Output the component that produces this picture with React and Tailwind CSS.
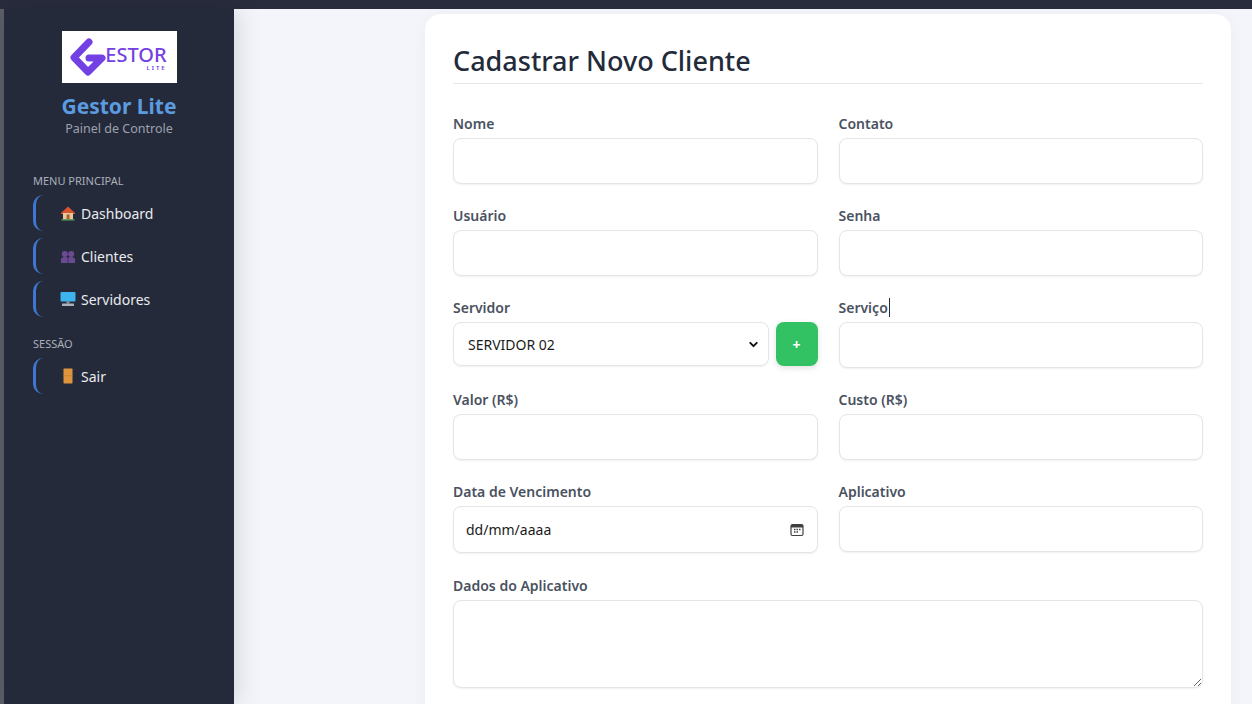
import { ChevronDown } from 'lucide-react';

const font = { fontFamily: '"Noto Sans", "Open Sans", sans-serif' };

const HomeIcon = () => (
  <svg width="16" height="16" viewBox="0 0 16 16">
    <path d="M1 8 8 1.5 15 8v1H1z" fill="#d9542f" />
    <rect x="3" y="8" width="10" height="6.5" fill="#e8c79a" />
    <rect x="6.6" y="9.5" width="3" height="5" fill="#a8622d" />
    <rect x="1.5" y="14.2" width="13" height="1.3" fill="#58a55c" />
  </svg>
);

const UsersIcon = () => (
  <svg width="16" height="16" viewBox="0 0 16 16" fill="#6b4a94">
    <circle cx="4.8" cy="6" r="3" />
    <circle cx="11.2" cy="6" r="3" />
    <path d="M1 15v-3.5C1 10 2.5 9 4.5 9h2c.8 0 1.2.8 1.2 2v4zM8.3 15v-4c0-1.2.4-2 1.2-2h2c2 0 3.500 1 3.500 2.500V15z" />
  </svg>
);

const ScreenIcon = () => (
  <svg width="16" height="16" viewBox="0 0 16 16">
    <rect x="0.500" y="1" width="15" height="9.500" rx="1" fill="#3db4ee" />
    <rect x="6.500" y="10.500" width="3" height="2" fill="#8d99a3" />
    <rect x="2" y="12.500" width="12" height="2.500" rx="0.500" fill="#a9b3bb" />
  </svg>
);

const DoorIcon = () => (
  <svg width="16" height="16" viewBox="0 0 16 16">
    <rect x="3.500" y="0.500" width="9" height="15" rx="0.700" fill="#e0933f" />
    <rect x="3.500" y="7.500" width="9" height="0.700" fill="#c77d2e" />
  </svg>
);

const CalendarIcon = () => (
  <svg width="14" height="14" viewBox="0 0 14 14" fill="none">
    <rect x="1" y="1.500" width="12" height="11" rx="1.500" stroke="#3f3f3f" strokeWidth="1.200" />
    <rect x="1" y="2" width="12" height="2.500" fill="#3f3f3f" />
    <path d="M4 6.500h1.500M6.500 6.500H8M9 6.500h1.500M4 9h1.500M6.500 9H8" stroke="#3f3f3f" strokeWidth="1.400" />
  </svg>
);

const LogoMark = () => (
  <svg width="42" height="39" viewBox="0 0 42 39" fill="none">
    <path
      d="M21 4 6 19.500 20 34l14-14H21"
      stroke="#7340e4"
      strokeWidth="7"
      strokeLinecap="round"
      strokeLinejoin="round"
    />
  </svg>
);

const MenuItem = ({ icon, label }) => (
  <a className="flex h-[36px] items-center gap-[5px] rounded-l-[10px] border-l-[3px] border-[#3f76d2] pl-[24px] text-[14px] text-[#e9ebef]">
    <span className="flex w-[16px] items-center justify-center">{icon}</span>
    <span>{label}</span>
  </a>
);

const Field = ({ label, children }) => (
  <div className="flex flex-col">
    <label className="mb-[4px] h-[20px] text-[14px] font-semibold leading-[20px] text-[#4a5261]">{label}</label>
    {children}
  </div>
);

const inputClass =
  'h-[46px] w-full rounded-[8px] border border-[#e3e5e9] bg-white shadow-[0_1px_2px_rgba(0,0,0,0.06)] outline-none';

const App = () => {
  return (
    <div className="flex h-screen flex-col overflow-hidden bg-[#f4f5fa]" style={font}>
      <div className="h-[9px] shrink-0 bg-[#282c3d]" />
      <div className="flex min-h-0 flex-1">
        <div className="w-[4px] shrink-0 bg-[#5b5e66]" />

        <aside className="z-10 flex w-[230px] shrink-0 flex-col bg-[#252a3a] shadow-[4px_0_24px_rgba(0,0,0,0.12)]">
          <div className="flex flex-col items-center pt-[22px]">
            <div className="ml-[0px] flex h-[52px] w-[115px] items-center justify-center bg-white pr-[3px]">
              <LogoMark />
              <div className="-ml-[5px] flex flex-col items-end">
                <span className="text-[20px] font-medium leading-[21px] text-[#7340e4]">ESTOR</span>
                <span className="text-[6px] font-semibold leading-[6px] tracking-[2px] text-[#7340e4]">LITE</span>
              </div>
            </div>
            <div className="mt-[7px] text-[21px] font-bold leading-[32px] text-[#5b9be0]">Gestor Lite</div>
            <div className="text-[12.500px] leading-[14px] text-[#9ba1ad]">Painel de Controle</div>
          </div>

          <div className="mt-[37px] pl-[29px] text-[11px] leading-[16px] text-[#aab0bb]">MENU PRINCIPAL</div>
          <nav className="mt-[6px] flex flex-col gap-[7px] pl-[29px]">
            <MenuItem icon={<HomeIcon />} label="Dashboard" />
            <MenuItem icon={<UsersIcon />} label="Clientes" />
            <MenuItem icon={<ScreenIcon />} label="Servidores" />
          </nav>

          <div className="mt-[19px] pl-[29px] text-[11px] leading-[16px] text-[#aab0bb]">SESSÃO</div>
          <nav className="mt-[6px] flex flex-col pl-[29px]">
            <MenuItem icon={<DoorIcon />} label="Sair" />
          </nav>
        </aside>

        <main className="min-w-0 flex-1 pl-[191px] pr-[21px] pt-[5px]">
          <div className="rounded-[16px] bg-white px-[28px] pt-[28px] pb-[40px] shadow-[0_2px_16px_rgba(30,40,80,0.04)]">
            <h1 className="border-b border-[#e5e7eb] pb-[3px] text-[27px] font-medium leading-[38px] text-[#232b3a]">
              Cadastrar Novo Cliente
            </h1>

            <form className="mt-[30px] grid grid-cols-2 gap-x-[21px]">
              <div className="h-[92px]">
                <Field label="Nome">
                  <input className={inputClass} />
                </Field>
              </div>
              <div className="h-[92px]">
                <Field label="Contato">
                  <input className={inputClass} />
                </Field>
              </div>
              <div className="h-[92px]">
                <Field label="Usuário">
                  <input className={inputClass} />
                </Field>
              </div>
              <div className="h-[92px]">
                <Field label="Senha">
                  <input className={inputClass} />
                </Field>
              </div>
              <div className="h-[92px]">
                <Field label="Servidor">
                  <div className="flex gap-[7px]">
                    <div className="flex h-[44px] flex-1 items-center justify-between rounded-[8px] border border-[#e3e5e9] bg-white pl-[14px] pr-[8px] text-[14px] text-[#1b1b1b] shadow-[0_1px_2px_rgba(0,0,0,0.06)]">
                      <span>SERVIDOR 02</span>
                      <ChevronDown size={13} strokeWidth={3.500} color="#111" />
                    </div>
                    <button
                      type="button"
                      className="h-[44px] w-[42px] rounded-[8px] bg-[#33c263] text-[14px] font-bold text-white shadow-[0_2px_6px_rgba(0,0,0,0.12)]"
                    >
                      +
                    </button>
                  </div>
                </Field>
              </div>
              <div className="h-[92px]">
                <Field label={<>Serviç<span className="border-r border-[#232b3a] pr-px">o</span></>}>
                  <input className={inputClass} />
                </Field>
              </div>
              <div className="h-[92px]">
                <Field label="Valor (R$)">
                  <input className={inputClass} />
                </Field>
              </div>
              <div className="h-[92px]">
                <Field label="Custo (R$)">
                  <input className={inputClass} />
                </Field>
              </div>
              <div className="h-[94px]">
                <Field label="Data de Vencimento">
                  <div className="flex h-[47px] items-center justify-between rounded-[8px] border border-[#e3e5e9] bg-white pl-[12px] pr-[13px] text-[14px] text-[#1b1b1b] shadow-[0_1px_2px_rgba(0,0,0,0.06)]">
                    <span>dd/mm/aaaa</span>
                    <CalendarIcon />
                  </div>
                </Field>
              </div>
              <div className="h-[94px]">
                <Field label="Aplicativo">
                  <input className={inputClass} />
                </Field>
              </div>
              <div className="col-span-2">
                <Field label="Dados do Aplicativo">
                  <textarea className="h-[88px] w-full rounded-[8px] border border-[#e3e5e9] bg-white shadow-[0_1px_2px_rgba(0,0,0,0.06)] outline-none" />
                </Field>
              </div>
            </form>
          </div>
        </main>
      </div>
    </div>
  );
};

export default App;
